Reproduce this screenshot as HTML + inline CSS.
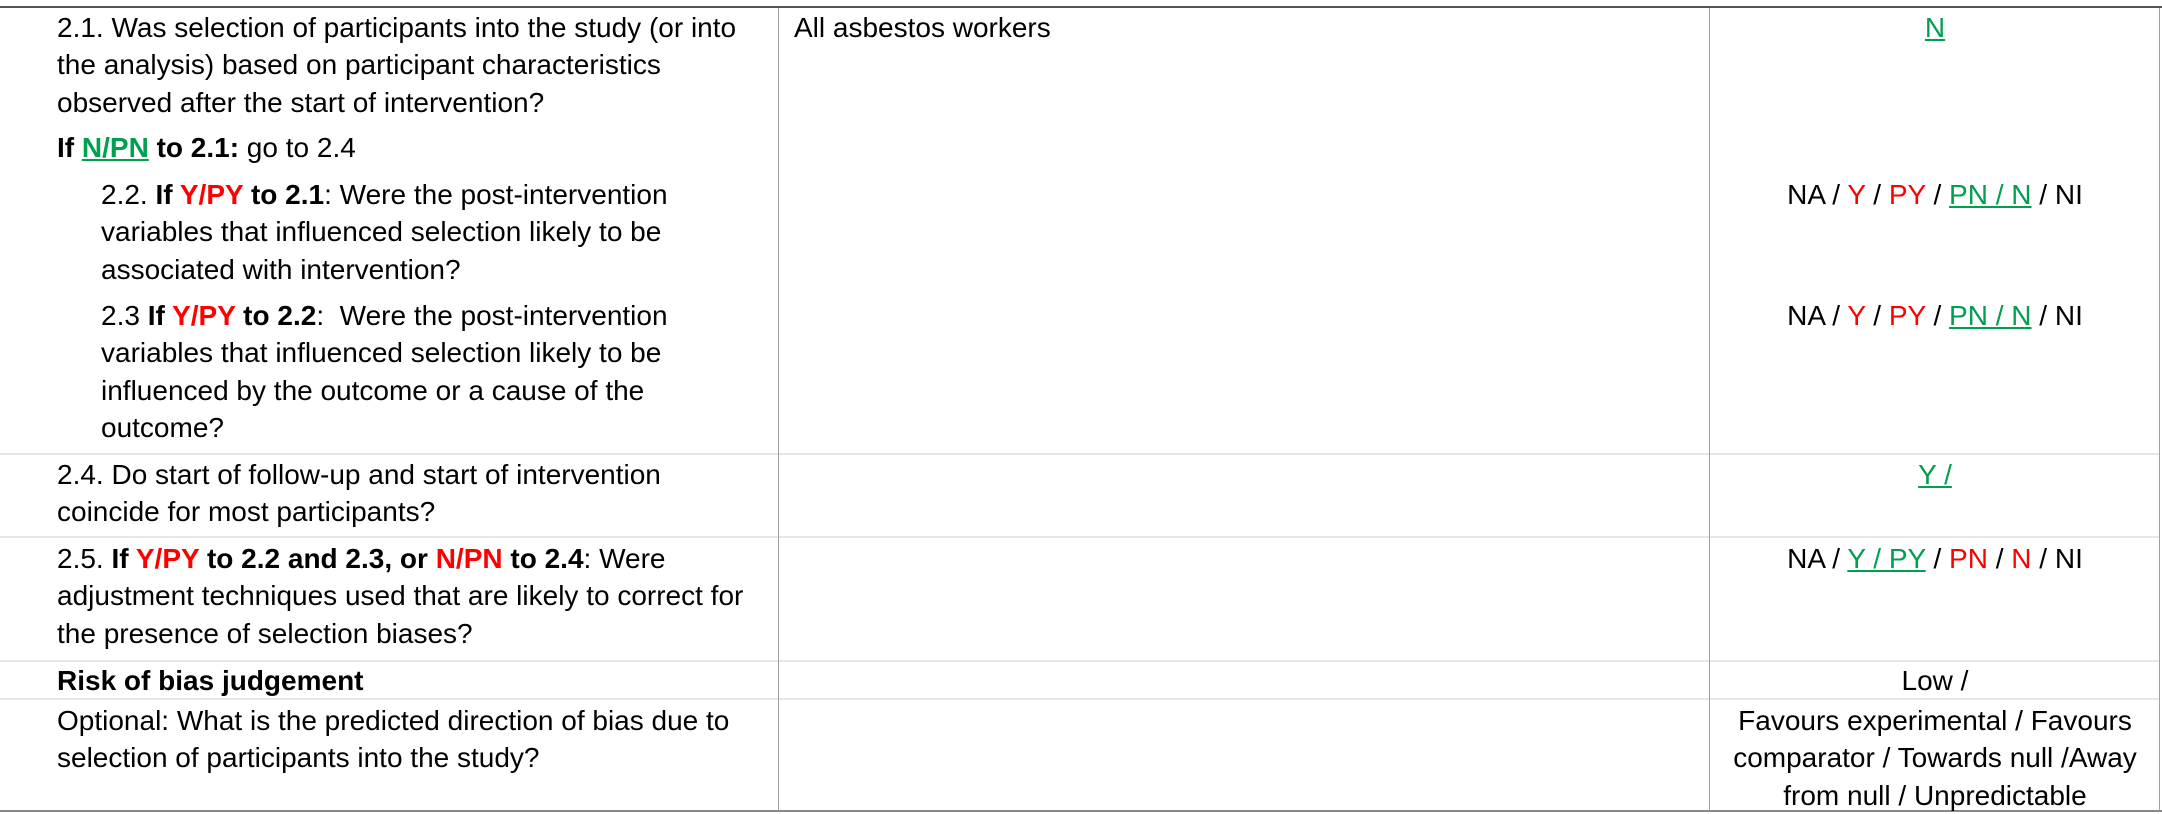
<!DOCTYPE html>
<html><head><meta charset="utf-8"><style>
html,body{margin:0;padding:0;background:#fff;}
body{width:2162px;height:814px;position:relative;overflow:hidden;font-family:"Liberation Sans",Arial,sans-serif;font-size:28px;color:#000;}
.t{position:absolute;line-height:37.4px;white-space:nowrap;}
.c{text-align:center;width:440px;left:1715px;}
.r{color:#ff0000;}
.g{color:#00a050;text-decoration:underline;}
.hl{position:absolute;left:0;width:2162px;height:2px;background:#555;}
.sep{position:absolute;left:0;width:2160px;height:2px;background:#e6e6e6;}
.vl{position:absolute;top:8px;width:1px;height:803px;background:#a0a0a0;}
</style></head><body>
<div class="hl" style="top:6px"></div>
<div class="hl" style="top:810px;background:#888"></div>
<div class="sep" style="top:453px"></div>
<div class="sep" style="top:536px"></div>
<div class="sep" style="top:660px"></div>
<div class="sep" style="top:698px"></div>
<div class="vl" style="left:778px"></div>
<div class="vl" style="left:1709px"></div>
<div class="vl" style="left:2159px"></div>

<div class="t" style="left:57px;top:9px">2.1. Was selection of participants into the study (or into<br>the analysis) based on participant characteristics<br>observed after the start of intervention?</div>
<div class="t" style="left:57px;top:129px"><b>If <span class="g">N/PN</span> to 2.1:</b> go to 2.4</div>
<div class="t" style="left:101px;top:176px">2.2. <b>If <span class="r">Y/PY</span> to 2.1</b>: Were the post-intervention<br>variables that influenced selection likely to be<br>associated with intervention?</div>
<div class="t" style="left:101px;top:297px">2.3 <b>If <span class="r">Y/PY</span> to 2.2</b>:&nbsp; Were the post-intervention<br>variables that influenced selection likely to be<br>influenced by the outcome or a cause of the<br>outcome?</div>
<div class="t" style="left:57px;top:456px">2.4. Do start of follow-up and start of intervention<br>coincide for most participants?</div>
<div class="t" style="left:57px;top:540px">2.5. <b>If <span class="r">Y/PY</span> to 2.2 and 2.3, or <span class="r">N/PN</span> to 2.4</b>: Were<br>adjustment techniques used that are likely to correct for<br>the presence of selection biases?</div>
<div class="t" style="left:57px;top:662px"><b>Risk of bias judgement</b></div>
<div class="t" style="left:57px;top:702px">Optional: What is the predicted direction of bias due to<br>selection of participants into the study?</div>

<div class="t" style="left:794px;top:9px">All asbestos workers</div>

<div class="t c" style="top:9px"><span class="g">N</span></div>
<div class="t c" style="top:176px">NA / <span class="r">Y</span> / <span class="r">PY</span> / <span class="g">PN / N</span> / NI</div>
<div class="t c" style="top:297px">NA / <span class="r">Y</span> / <span class="r">PY</span> / <span class="g">PN / N</span> / NI</div>
<div class="t c" style="top:456px"><span class="g">Y /</span></div>
<div class="t c" style="top:540px">NA / <span class="g">Y / PY</span> / <span class="r">PN</span> / <span class="r">N</span> / NI</div>
<div class="t c" style="top:662px">Low /</div>
<div class="t c" style="top:702px">Favours experimental / Favours<br>comparator / Towards null /Away<br>from null / Unpredictable</div>
</body></html>
